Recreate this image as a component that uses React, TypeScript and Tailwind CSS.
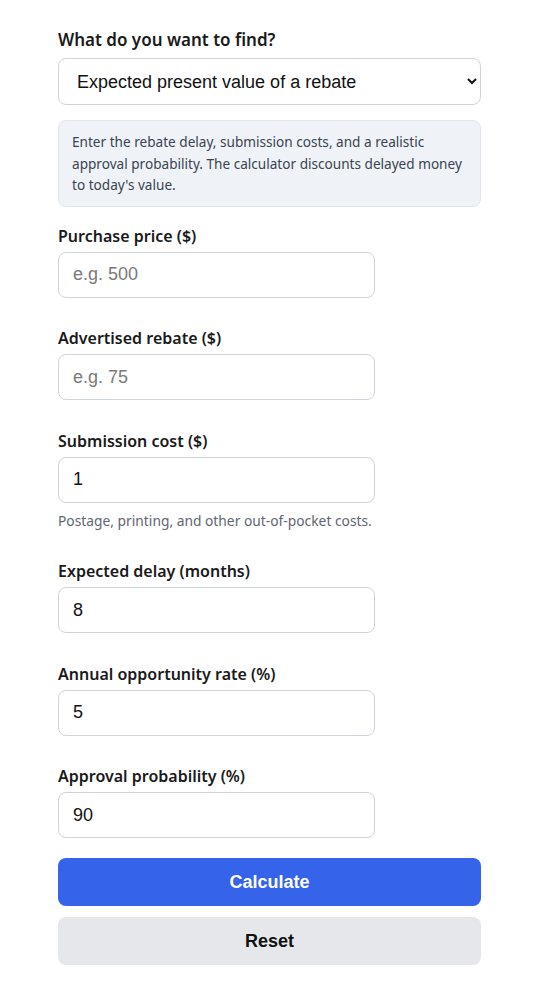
import React, { useState } from "react";

type FieldProps = {
  label: string;
  value: string;
  placeholder?: string;
  help?: string;
  onChange: (v: string) => void;
};

function Field({ label, value, placeholder, help, onChange }: FieldProps) {
  return (
    <div className="flex flex-col">
      <label className="mb-[5px] font-['Noto_Sans',sans-serif] text-[16px] leading-[22px] font-semibold text-[#1a1a1a]">
        {label}
      </label>
      <input
        type="number"
        value={value}
        placeholder={placeholder}
        onChange={(e) => onChange(e.target.value)}
        className="h-[46px] w-[317px] rounded-[8px] border border-[#cfd4dc] bg-white px-[14px] font-['Liberation_Sans',Arial,sans-serif] text-[18px] text-[#111] outline-none [appearance:textfield] placeholder:text-[#7a7a7a] [&::-webkit-inner-spin-button]:appearance-none"
      />
      {help && (
        <p className="mt-[8px] font-['Noto_Sans',sans-serif] text-[13.8px] leading-[20px] text-[#5f6670]">
          {help}
        </p>
      )}
    </div>
  );
}

export default function App() {
  const [mode, setMode] = useState("pv");
  const [price, setPrice] = useState("");
  const [rebate, setRebate] = useState("");
  const [cost, setCost] = useState("1");
  const [delay, setDelay] = useState("8");
  const [rate, setRate] = useState("5");
  const [prob, setProb] = useState("90");

  const reset = () => {
    setPrice("");
    setRebate("");
    setCost("1");
    setDelay("8");
    setRate("5");
    setProb("90");
  };

  return (
    <div className="min-h-screen bg-white">
      <div className="mx-[58px] flex w-[423px] flex-col pt-[29px] pb-[32px]">
        <label className="mb-[7px] font-['Noto_Sans',sans-serif] text-[17px] leading-[22px] font-semibold text-[#1a1a1a]">
          What do you want to find?
        </label>
        <select
          value={mode}
          onChange={(e) => setMode(e.target.value)}
          className="h-[47px] w-full rounded-[8px] border border-[#cfd4dc] bg-white pr-[8px] pl-[14px] font-['Liberation_Sans',Arial,sans-serif] text-[18px] text-[#111] outline-none"
        >
          <option value="pv">Expected present value of a rebate</option>
          <option value="net">Net price after rebate</option>
          <option value="breakeven">Break-even approval probability</option>
        </select>

        <div className="mt-[15px] rounded-[8px] border border-[#dfe5ee] bg-[#eff3f8] px-[13px] pt-[10px] pb-[10px] font-['Noto_Sans',sans-serif] text-[13.6px] leading-[21.5px] text-[#3a4350]">
          Enter the rebate delay, submission costs, and a realistic approval probability. The calculator discounts delayed money to today's value.
        </div>

        <div className="mt-[18px] flex flex-col gap-[29.5px]">
          <Field label="Purchase price ($)" value={price} placeholder="e.g. 500" onChange={setPrice} />
          <Field label="Advertised rebate ($)" value={rebate} placeholder="e.g. 75" onChange={setRebate} />
          <Field
            label="Submission cost ($)"
            value={cost}
            onChange={setCost}
            help="Postage, printing, and other out-of-pocket costs."
          />
          <Field label="Expected delay (months)" value={delay} onChange={setDelay} />
          <Field label="Annual opportunity rate (%)" value={rate} onChange={setRate} />
          <Field label="Approval probability (%)" value={prob} onChange={setProb} />
        </div>

        <button
          type="button"
          className="mt-[20px] h-[48px] w-full rounded-[8px] bg-[#3563e9] font-['Liberation_Sans',Arial,sans-serif] text-[18px] font-bold text-white"
        >
          Calculate
        </button>
        <button
          type="button"
          onClick={reset}
          className="mt-[11px] h-[48px] w-full rounded-[8px] bg-[#e5e7eb] font-['Liberation_Sans',Arial,sans-serif] text-[18px] font-bold text-[#111]"
        >
          Reset
        </button>
      </div>
    </div>
  );
}
